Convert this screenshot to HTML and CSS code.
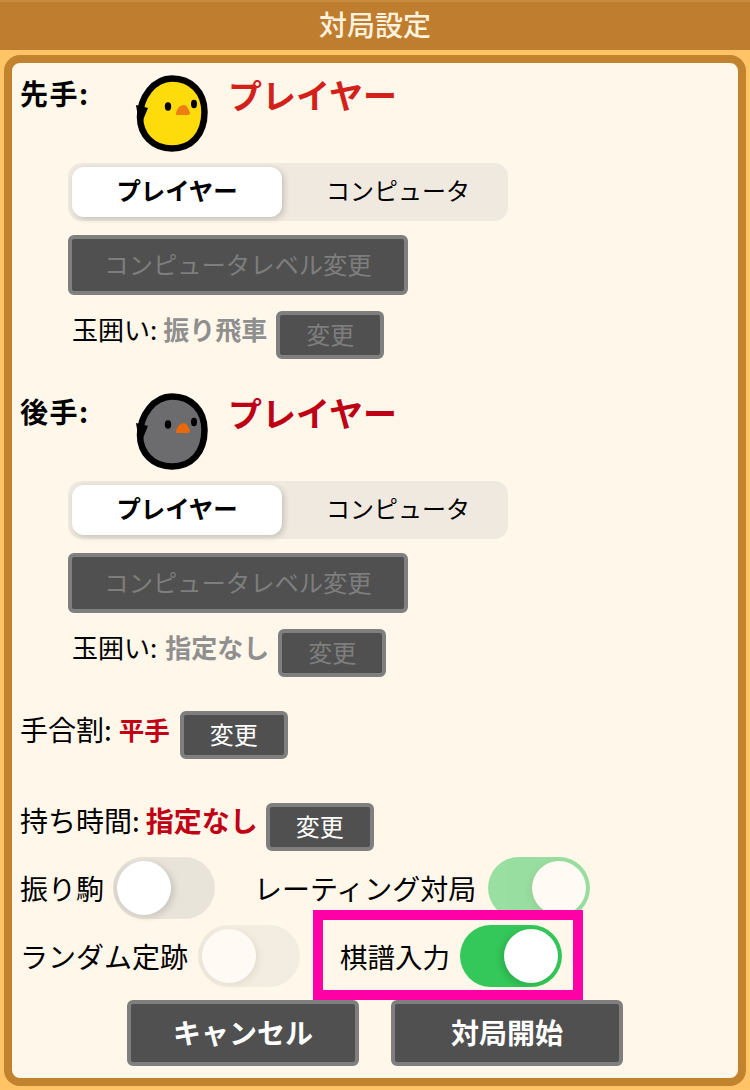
FILE: index.html
```html
<!DOCTYPE html>
<html lang="ja">
<head>
<meta charset="utf-8">
<title>対局設定</title>
<link rel="stylesheet" href="styles.css">
</head>
<body>
<svg class="defs" width="0" height="0" aria-hidden="true">
  <symbol id="chick" viewBox="0 0 72 78">
    <path class="chick-body" d="M36 3.5C55 3.5 68.500 17 68.500 37C68.500 60 55 73.500 36 73.500C17 73.500 4 60 4 42C4 22 18 3.500 36 3.500Z"/>
    <path d="M0 30L12 33L7 45L2 42Z"/>
    <ellipse cx="32" cy="31.500" rx="3.200" ry="4.200"/>
    <ellipse cx="58" cy="29" rx="3" ry="4.200"/>
    <path class="chick-beak" d="M40 40C40 34 44 30 48 30C51 30 53 35 54 38C54 40 52 40 50 40Z"/>
  </symbol>
</svg>

<header class="title-bar">対局設定</header>

<main class="panel">
  <section class="side">
    <div class="side-head">
      <span class="side-label">先手:</span>
      <svg class="chick yellow"><use href="#chick"/></svg>
      <span class="side-name bright">プレイヤー</span>
    </div>
    <div class="segment">
      <span class="seg-item selected">プレイヤー</span>
      <span class="seg-item">コンピュータ</span>
    </div>
    <button class="btn btn-level disabled">コンピュータレベル変更</button>
    <div class="castle">
      <span>玉囲い:</span>
      <strong class="muted">振り飛車</strong>
      <button class="btn btn-small disabled">変更</button>
    </div>
  </section>

  <section class="side second">
    <div class="side-head">
      <span class="side-label">後手:</span>
      <svg class="chick gray"><use href="#chick"/></svg>
      <span class="side-name dark">プレイヤー</span>
    </div>
    <div class="segment">
      <span class="seg-item selected">プレイヤー</span>
      <span class="seg-item">コンピュータ</span>
    </div>
    <button class="btn btn-level disabled">コンピュータレベル変更</button>
    <div class="castle">
      <span>玉囲い:</span>
      <strong class="muted shifted">指定なし</strong>
      <button class="btn btn-small disabled">変更</button>
    </div>
  </section>

  <div class="setting handicap">
    <span>手合割:</span>
    <strong class="red small-red">平手</strong>
    <button class="btn btn-small">変更</button>
  </div>

  <div class="setting time">
    <span>持ち時間:</span>
    <strong class="red">指定なし</strong>
    <button class="btn btn-small">変更</button>
  </div>

  <div class="switch-row">
    <div class="switch-item col-a">
      <span>振り駒</span>
      <span class="toggle"><i></i></span>
    </div>
    <div class="switch-item wide-gap">
      <span>レーティング対局</span>
      <span class="toggle on faded"><i></i></span>
    </div>
  </div>

  <div class="switch-row lower">
    <div class="switch-item col-b">
      <span>ランダム定跡</span>
      <span class="toggle faded"><i></i></span>
    </div>
    <div class="switch-item highlighted">
      <span class="kifu-label">棋譜入力</span>
      <span class="toggle on"><i></i></span>
      <span class="highlight-box"></span>
    </div>
  </div>

  <div class="actions">
    <button class="btn btn-main">キャンセル</button>
    <button class="btn btn-main">対局開始</button>
  </div>
</main>
</body>
</html>
```

FILE: styles.css
```css
* { box-sizing: border-box; }

html, body {
  margin: 0;
  height: 1090px;
  overflow: hidden;
}

body {
  background: #ffc465;
  color: #000;
  font-family: "Noto Sans CJK JP", "Noto Sans", sans-serif;
  font-size: 26px;
}

.defs { position: absolute; }

.title-bar {
  height: 50px;
  background: #bf7e2f;
  border-top: 2px solid #c98d42;
  color: #fff3df;
  font-size: 28px;
  font-weight: 500;
  line-height: 44px;
  text-align: center;
}

.panel {
  height: 1031px;
  margin: 5px 4px 0;
  padding: 12px 0 0 8px;
  background: #fff7e9;
  border: 8px solid #c2832f;
  border-radius: 16px;
}

.side.second { margin-top: 34px; }

.side-head {
  display: flex;
  align-items: flex-start;
  height: 88px;
}

.side-label {
  width: 116px;
  font-size: 28px;
  font-weight: 700;
  letter-spacing: 1.5px;
  line-height: 36px;
}

.chick {
  flex: none;
  width: 72px;
  height: 78px;
  fill: #000;
}
.chick.yellow { --body: #fedb0b; --beak: #ef7d16; }
.chick.gray { --body: #6c6c6e; --beak: #e8680c; }
.chick-body { fill: var(--body); stroke: #000; stroke-width: 6.5; }
.chick-beak { fill: var(--beak); }

.side-name {
  margin-left: 20px;
  font-size: 34px;
  font-weight: 700;
  line-height: 40px;
}
.side-name.bright { color: #d3201a; }
.side-name.dark { color: #bd0016; }

.segment {
  display: flex;
  width: 440px;
  height: 58px;
  margin-left: 48px;
  padding: 4px;
  background: #efe9df;
  border-radius: 14px;
}

.seg-item {
  flex: 1;
  padding-left: 10px;
  font-size: 24px;
  line-height: 46px;
  text-align: center;
}
.seg-item.selected {
  flex: none;
  width: 210px;
  padding-left: 0;
  background: #fff;
  border-radius: 12px;
  box-shadow: 2px 2px 6px rgba(0, 0, 0, .18);
  font-size: 24.4px;
  font-weight: 700;
}

.btn {
  padding: 0 0 3px;
  background: #505050;
  border: 4px solid #7f7f7f;
  border-radius: 6px;
  color: #fff;
  font-family: inherit;
  font-size: 24px;
}
.btn.disabled { color: #7e7e7e; }

.btn-level {
  display: block;
  width: 340px;
  height: 60px;
  margin: 14px 0 0 48px;
  font-size: 24.3px;
}

.btn-small {
  flex: none;
  width: 108px;
  height: 48px;
}

.castle {
  display: flex;
  align-items: center;
  gap: 6px;
  height: 48px;
  margin: 16px 0 0 52px;
}
.castle span,
.castle strong { margin-bottom: 14px; }
.castle .btn-small { margin-left: 3px; }

.muted {
  color: #8f8f8f;
  font-size: 26px;
}
.muted.shifted { margin-left: 2px; }

.setting {
  display: flex;
  align-items: center;
  gap: 6px;
  height: 48px;
  font-size: 28px;
}
.setting span,
.setting strong { margin-bottom: 14px; }
.handicap { margin-top: 34px; gap: 7px; }
.handicap span { margin-bottom: 12px; }
.handicap .btn-small { margin-left: 3px; }
.time { margin-top: 44px; }
.time .btn-small { margin-left: 2px; }

.red {
  color: #c10016;
  font-size: 28px;
  font-weight: 700;
}
.red.small-red { font-size: 25.5px; }

.switch-row {
  display: flex;
  height: 62px;
  margin-top: 6px;
  font-size: 28px;
}

.switch-item {
  display: flex;
  align-items: center;
  gap: 10px;
}
.col-a { width: 234px; gap: 9px; }
.col-b { width: 320px; }
.wide-gap { gap: 12px; }

.kifu-label { font-size: 27.5px; }

.toggle {
  display: block;
  flex: none;
  width: 102px;
  height: 62px;
  background: linear-gradient(90deg, #ddd8ce, #e9e4da 25%, #e9e4da);
  border-radius: 31px;
}
.toggle i {
  display: block;
  width: 54px;
  height: 54px;
  margin: 4px;
  background: #fff;
  border-radius: 50%;
  box-shadow: 3px 2px 7px rgba(0, 0, 0, .14);
}
.toggle.on { background: #34c759; }
.toggle.on i {
  margin-left: 44px;
  box-shadow: -3px 2px 7px rgba(0, 0, 0, .14);
}
.toggle.faded { opacity: .5; }

.highlighted { position: relative; }
.highlight-box {
  position: absolute;
  top: -15px;
  left: -27px;
  width: 270px;
  height: 90px;
  border: 10px solid #ff00a6;
  pointer-events: none;
}

.actions {
  display: flex;
  gap: 32px;
  margin: 13px 0 0 107px;
}

.btn-main {
  width: 232px;
  height: 66px;
  font-size: 28px;
  font-weight: 700;
}
```
